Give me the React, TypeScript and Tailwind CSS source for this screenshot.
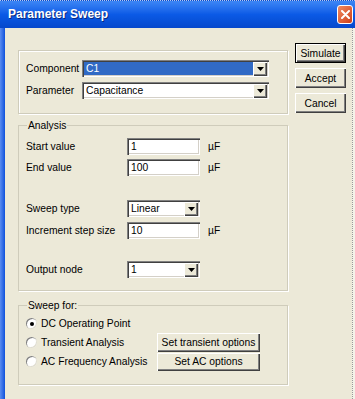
import React from "react"

const sunken =
  "bg-white shadow-[inset_1px_1px_0_#808080,inset_2px_2px_0_#404040,inset_-1px_-1px_0_#ffffff,inset_-2px_-2px_0_#d4d0c8]"
const raised =
  "bg-[#ece9d8] shadow-[inset_1px_1px_0_#ffffff,inset_-1px_-1px_0_#404040,inset_-2px_-2px_0_#808080]"

function Arrow() {
  return (
    <div className={`${raised} flex h-[14px] w-[14px] items-center justify-center`}>
      <svg width="7" height="4" viewBox="0 0 7 4">
        <path d="M0 0h7L3.5 4z" fill="#000" />
      </svg>
    </div>
  )
}

function Combo({ value, selected, width }: { value: string; selected?: boolean; width: string }) {
  return (
    <div className={`${sunken} ${width} flex h-[17px] items-center p-[2px]`}>
      <div
        className={`flex h-full flex-1 items-center px-[2px] ${selected ? "bg-[#316ac5] text-white" : "text-black"}`}
      >
        {value}
      </div>
      <Arrow />
    </div>
  )
}

function TextBox({ value }: { value: string }) {
  return (
    <div className={`${sunken} flex h-[17px] w-[73px] items-center px-[4px]`}>{value}</div>
  )
}

function Button({ label, def, width = "w-[51px]", h = "h-[20px]" }: { label: string; def?: boolean; width?: string; h?: string }) {
  return (
    <div
      className={`${width} ${h} flex items-center justify-center ${
        def
          ? "border border-black bg-[#ece9d8] shadow-[inset_1px_1px_0_#ffffff,inset_-1px_-1px_0_#404040,inset_-2px_-2px_0_#808080]"
          : raised
      }`}
    >
      {label}
    </div>
  )
}

function Radio({ checked, label }: { checked?: boolean; label: string }) {
  return (
    <div className="flex items-center gap-[4px]">
      <div className="flex h-[11px] w-[11px] items-center justify-center rounded-full bg-white shadow-[inset_1px_1px_0_#808080,inset_-1px_-1px_0_#e0ddd0]">
        {checked && <div className="h-[4px] w-[4px] rounded-full bg-black" />}
      </div>
      <span>{label}</span>
    </div>
  )
}

function Row({ label, children }: { label: string; children: React.ReactNode }) {
  return (
    <div className="flex h-[17px] items-center">
      <span className="w-[101px]">{label}</span>
      {children}
    </div>
  )
}

export default function App() {
  return (
    <div
      className="flex h-[399px] w-[355px] flex-col overflow-hidden bg-[#ece9d8] text-[10.3px] leading-[13px] text-black"
      style={{ fontFamily: '"Liberation Sans", Arial, sans-serif' }}
    >
      <div className="flex h-[28px] shrink-0 items-center justify-between border-t border-dotted border-white/70 bg-gradient-to-b from-[#3d86f5] via-[#0b5ae6] to-[#0648cc] pl-[8px] pr-[2px]">
        <span className="text-[12px] font-bold text-white [text-shadow:1px_1px_0_#0a2a80]">Parameter Sweep</span>
        <div className="flex h-[19px] w-[16px] items-center justify-center rounded-[3px] border border-white bg-gradient-to-br from-[#f08a60] to-[#cc3b14]">
          <svg width="9" height="9" viewBox="0 0 9 9">
            <path d="M1 1l7 7M8 1l-7 7" stroke="#fff" strokeWidth="2" strokeLinecap="round" />
          </svg>
        </div>
      </div>

      <div className="flex flex-1">
        <div className="w-[5px] bg-gradient-to-r from-[#5a8cf0] to-[#0a50dc]" />
        <div className="flex flex-1">
          <div className="ml-[13px] flex w-[270px] flex-col pt-[22px]">
            <div className="flex h-[64px] flex-col gap-[5px] border border-[#cfccbb] px-[7px] pt-[9px] shadow-[inset_1px_1px_0_#ffffff,1px_1px_0_#ffffff]">
              <div className="flex h-[17px] items-center">
                <span className="w-[56px]">Component</span>
                <Combo value="C1" selected width="w-[187px]" />
              </div>
              <div className="flex h-[17px] items-center">
                <span className="w-[56px]">Parameter</span>
                <Combo value="Capacitance" width="w-[187px]" />
              </div>
            </div>

            <fieldset className="mt-[5px] border border-[#cfccbb] px-[7px] pb-[12px] pt-[6px] shadow-[1px_1px_0_#ffffff]">
              <legend className="ml-[1px] px-[1px]">Analysis</legend>
              <div className="flex flex-col">
                <Row label="Start value">
                  <TextBox value="1" />
                  <span className="ml-[8px]">µF</span>
                </Row>
                <div className="mt-[4px]">
                  <Row label="End value">
                    <TextBox value="100" />
                    <span className="ml-[8px]">µF</span>
                  </Row>
                </div>
                <div className="mt-[24px]">
                  <Row label="Sweep type">
                    <Combo value="Linear" width="w-[73px]" />
                  </Row>
                </div>
                <div className="mt-[5px]">
                  <Row label="Increment step size">
                    <TextBox value="10" />
                    <span className="ml-[8px]">µF</span>
                  </Row>
                </div>
                <div className="mt-[22px]">
                  <Row label="Output node">
                    <Combo value="1" width="w-[73px]" />
                  </Row>
                </div>
              </div>
            </fieldset>

            <fieldset className="mt-[8px] border border-[#cfccbb] px-[7px] pb-[13px] pt-[2px] shadow-[1px_1px_0_#ffffff]">
              <legend className="ml-[1px] px-[1px]">Sweep for:</legend>
              <div className="flex h-[19px] items-center">
                <Radio checked label="DC Operating Point" />
              </div>
              <div className="flex h-[19px] items-center">
                <div className="w-[131px]">
                  <Radio label="Transient Analysis" />
                </div>
                <Button label="Set transient options" width="w-[103px]" h="h-[19px]" />
              </div>
              <div className="flex h-[19px] items-center">
                <div className="w-[131px]">
                  <Radio label="AC Frequency Analysis" />
                </div>
                <Button label="Set AC options" width="w-[103px]" h="h-[18px]" />
              </div>
            </fieldset>
          </div>

          <div className="ml-[7px] flex flex-col gap-[5px] pt-[15px]">
            <Button label="Simulate" def h="h-[20px]" />
            <Button label="Accept" />
            <Button label="Cancel" />
          </div>
        </div>
        <div className="w-[3px] border-l border-dotted border-[#9a9a9a] bg-[#f4f2e8]" />
      </div>
    </div>
  )
}
